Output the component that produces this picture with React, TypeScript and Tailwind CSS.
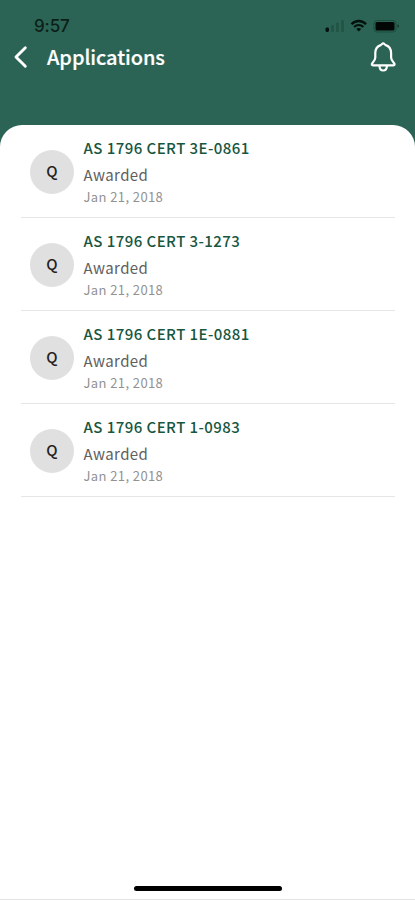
const certificates = [
  { name: 'AS 1796 CERT 3E-0861', status: 'Awarded', date: 'Jan 21, 2018' },
  { name: 'AS 1796 CERT 3-1273', status: 'Awarded', date: 'Jan 21, 2018' },
  { name: 'AS 1796 CERT 1E-0881', status: 'Awarded', date: 'Jan 21, 2018' },
  { name: 'AS 1796 CERT 1-0983', status: 'Awarded', date: 'Jan 21, 2018' },
];

function StatusBar() {
  return (
    <div className="flex h-[38px] items-start justify-between pt-[16px] pr-[15px] pl-[34px]">
      <span className="font-['Inter',sans-serif] text-[17px] leading-[20px] font-medium tracking-[-0.1px] text-[#0b1f18]">9:57</span>
      <svg width="76" height="20" viewBox="0 0 76 20" fill="none" aria-hidden="true">
        <rect x="1.5" y="11.5" width="3.5" height="4.5" rx="1.4" fill="#04100c" />
        <rect x="7" y="9" width="3" height="7" rx="1" fill="#225546" />
        <rect x="12" y="6.500" width="3" height="9.500" rx="1" fill="#225546" />
        <rect x="17" y="4" width="3" height="12" rx="1" fill="#225546" />
        <path d="M27.500 8.200C31.500 3.900 38 3.900 42 8.200" stroke="#04100c" strokeWidth="2.400" />
        <path d="M30.100 11C32.700 8.300 36.800 8.300 39.400 11" stroke="#04100c" strokeWidth="2" />
        <path d="M32.300 12.900C33.700 11.700 35.900 11.700 37.200 12.900L34.750 15.500Z" fill="#04100c" />
        <rect x="50" y="4.500" width="22" height="11.500" rx="3" stroke="#1d4d3f" />
        <rect x="51.500" y="6" width="19" height="8.500" rx="1.500" fill="#020605" />
        <path d="M73.500 8.200C75.500 8.800 75.500 11.200 73.500 12Z" fill="#17372d" />
      </svg>
    </div>
  );
}

function Header() {
  return (
    <header className="flex h-[38px] items-center pr-[18px] pl-[13px]">
      <button aria-label="Back" className="block">
        <svg width="16" height="24" viewBox="0 0 16 24" fill="none">
          <path d="M12.300 2.800L3 12L12.300 21.200" stroke="white" strokeWidth="2.900" strokeLinecap="round" strokeLinejoin="round" />
        </svg>
      </button>
      <h1 className="ml-[18px] text-[20px] leading-[28px] font-medium tracking-[-0.07px] text-white [-webkit-text-stroke:0.2px_white]">Applications</h1>
      <button aria-label="Notifications" className="ml-auto block">
        <svg width="28" height="32" viewBox="0 0 28 32" fill="none" stroke="white" strokeWidth="2.200" strokeLinejoin="round" strokeLinecap="round">
          <path d="M14.200 2.300C13.100 2.300 12.900 3.600 11.700 4.100C8.200 5.300 6.300 8.200 6.300 12V16.500C6.300 19 4.800 20.400 3.300 22.200C2.500 23.300 2.700 24.300 4 24.300H24.400C25.700 24.300 25.900 23.300 25.100 22.200C23.600 20.400 22.100 19 22.100 16.500V12C22.100 8.200 20.200 5.300 16.700 4.100C15.500 3.600 15.300 2.300 14.200 2.300Z" />
          <path d="M10.500 25C10.600 31 17.800 31 17.900 25" />
        </svg>
      </button>
    </header>
  );
}

export default function App() {
  return (
    <div className="flex h-[900px] w-full flex-col overflow-hidden bg-[#2b6454] font-['Noto_Sans_CJK_SC',sans-serif]">
      <StatusBar />
      <Header />
      <main className="mt-[49px] flex flex-1 flex-col rounded-t-[22px] border-b border-[#e4e4e4] bg-white pr-[20px] pl-[21px]">
        <ul>
          {certificates.map((item) => (
            <li key={item.name} className="flex h-[93.050px] items-center border-b-[1.500px] border-[#e6e6e6] pt-px pl-[9px]">
              <div className="flex size-[44px] items-center justify-center rounded-full bg-[#e0e0e0] text-[15px] font-medium text-[#222]">Q</div>
              <div className="mt-px ml-[9.500px] whitespace-nowrap">
                <div className="h-[27px] text-[15px] leading-[24px] font-medium tracking-[0.450px] text-[#17563f]">{item.name}</div>
                <div className="h-[23px] text-[15px] leading-[24px] tracking-[0.400px] text-[#606060]">{item.status}</div>
                <div className="text-[13px] leading-[22px] tracking-[0.400px] text-[#929292]">{item.date}</div>
              </div>
            </li>
          ))}
        </ul>
        <div className="mt-auto mb-[8px] ml-[113px] h-[5px] w-[148px] rounded-full bg-black" />
      </main>
    </div>
  );
}
